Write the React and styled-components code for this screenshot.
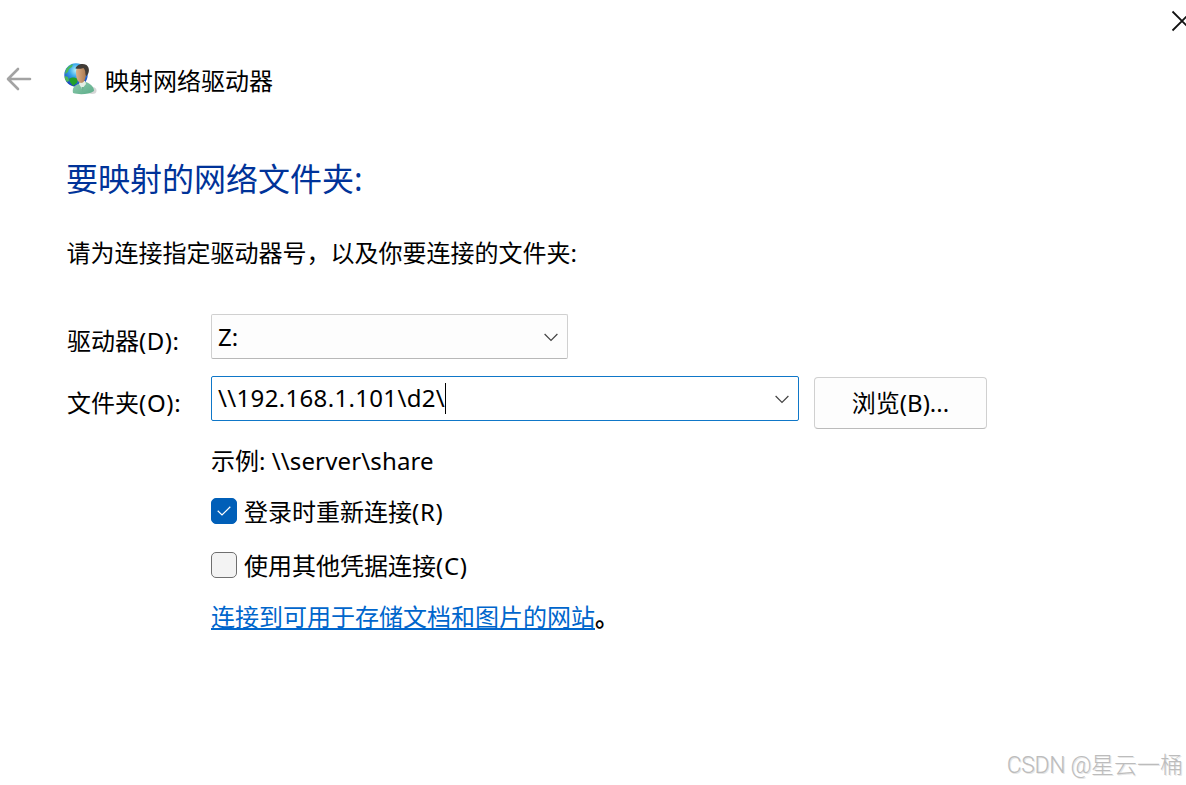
import React from 'react'
import styled, { createGlobalStyle } from 'styled-components'

function App() {
  return (
    <>
      <GlobalStyle />
      <Dialog>
        <TitleBar>
          <CloseButton aria-label='关闭'>
            <svg width='22' height='22' viewBox='0 0 22 22' fill='none' stroke='#111' strokeWidth='1.8'>
              <path d='M1.5 1.5 20.5 20.5M20.5 1.5 1.5 20.5' />
            </svg>
          </CloseButton>
        </TitleBar>
        <Header>
          <BackButton aria-label='返回'>
            <svg width='26' height='24' viewBox='0 0 26 24' fill='none' stroke='#a3a3a3' strokeWidth='2.6' strokeLinecap='round' strokeLinejoin='round'>
              <path d='M12 2 2 12 12 22M2.5 12H24' />
            </svg>
          </BackButton>
          <NetworkUserIcon />
          <Caption>映射网络驱动器</Caption>
        </Header>
        <Content>
          <Heading>要映射的网络文件夹:</Heading>
          <Description>请为连接指定驱动器号，以及你要连接的文件夹:</Description>
          <Field>
            <Label>驱动器<Latin $spacing='.5px'>(D):</Latin></Label>
            <Combo $width={357}>
              <Value>Z:</Value>
              <Chevron />
            </Combo>
          </Field>
          <Field>
            <Label>文件夹<Latin $spacing='.7px'>(O):</Latin></Label>
            <Combo $width={588} $focused>
              <Value $spacing='.33px' $lift='2px'>\\192.168.1.101\d2\</Value>
              <Caret />
              <Chevron />
            </Combo>
            <BrowseButton>浏览(B)...</BrowseButton>
          </Field>
          <Options>
            <Example>示例: <Latin $spacing='.14px'>\\server\share</Latin></Example>
            <CheckRow $height={54}>
              <CheckBox $checked>
                <svg width='14' height='10' viewBox='0 0 14 10' fill='none' stroke='#fff' strokeWidth='1.2'>
                  <path d='M.7 4.8 5 9 13.3.8' />
                </svg>
              </CheckBox>
              <CheckText>登录时重新连接<Latin $spacing='.7px'>(R)</Latin></CheckText>
            </CheckRow>
            <CheckRow $height={49}>
              <CheckBox />
              <CheckText>使用其他凭据连接<Latin $spacing='.7px'>(C)</Latin></CheckText>
            </CheckRow>
            <LinkLine>
              <SiteLink>连接到可用于存储文档和图片的网站</SiteLink>
              <FullStop>。</FullStop>
            </LinkLine>
          </Options>
        </Content>
        <Watermark>CSDN @<WatermarkName>星云一桶</WatermarkName></Watermark>
      </Dialog>
    </>
  )
}

function Chevron() {
  return (
    <svg width='14' height='9' viewBox='0 0 14 9' fill='none' stroke='#444' strokeWidth='1.2'>
      <path d='M.6 1 7 7.5 13.4 1' />
    </svg>
  )
}

function NetworkUserIcon() {
  return (
    <svg width='34' height='34' viewBox='-1 -1 34 34'>
      <defs>
        <radialGradient id='globe' cx='.5' cy='.3' r='.7'>
          <stop offset='0' stopColor='#b5f4fc' />
          <stop offset='.4' stopColor='#35a5ea' />
          <stop offset='1' stopColor='#1638b8' />
        </radialGradient>
        <linearGradient id='face' x1='0' x2='1'>
          <stop offset='0' stopColor='#dcb18a' />
          <stop offset='1' stopColor='#a9764c' />
        </linearGradient>
        <linearGradient id='shirt' x1='0' x2='1' y1='0' y2='1'>
          <stop offset='0' stopColor='#8fcbae' />
          <stop offset='1' stopColor='#5aac88' />
        </linearGradient>
        <clipPath id='globeClip'>
          <circle cx='12' cy='12' r='11.7' />
        </clipPath>
      </defs>
      <ellipse cx='28' cy='27.5' rx='4.5' ry='3.5' fill='#bbb' opacity='.6' />
      <circle cx='12' cy='12' r='11.7' fill='url(#globe)' />
      <g clipPath='url(#globeClip)'>
        <path d='M2 6 5 3 9 1 8 4 5 6 4 9 1 11ZM1 13l3 1 1 4-2 1-3-3Z' fill='#4cb85a' />
        <path d='M5 16c2-2 6-2 9 0l-1 4-4 3-3-4Z' fill='#22a02a' />
      </g>
      <path d='M9 30c-1-5 1-7 5-9l8-2c5 2 8 5 8 9-5 3.5-15 4-21 2Z' fill='url(#shirt)' />
      <path d='m15 21 3 5 4-5-1-3h-5Z' fill='#e3eee3' />
      <path d='m17.5 24 1 5 1.5-5Z' fill='#6fb192' />
      <path d='M12 9c0-4 3-6 7-5 4 0 4 4 3 8-1 5-2 8-5 8-4-1-5-6-5-11Z' fill='url(#face)' />
      <path d='M11.5 5.5c1-4 7-6 11-3.500 3.500 3 3 8 0 11-2-1 0-5-3-8-3 1-6 1-8 .5Z' fill='#413b36' />
    </svg>
  )
}

const GlobalStyle = createGlobalStyle`
  body {
    margin: 0;
    background: #fff;
    color: #000;
    font-family: "Noto Sans", "Noto Sans CJK SC", sans-serif;
    font-size: 24px;
    line-height: 32px;
  }
  button {
    font: inherit;
    color: inherit;
    padding: 0;
  }
  svg {
    display: block;
    flex-shrink: 0;
  }
`

const Dialog = styled.div`
  display: flex;
  flex-direction: column;
  width: 1186px;
  height: 785px;
  overflow: hidden;
  white-space: nowrap;
`

const TitleBar = styled.div`
  display: flex;
  justify-content: flex-end;
  height: 42px;
`

const CloseButton = styled.button`
  display: flex;
  align-items: center;
  width: 15px;
  border: none;
  background: none;
`

const Header = styled.header`
  display: flex;
  align-items: center;
  height: 74px;
  padding-left: 6px;
`

const BackButton = styled.button`
  width: 57px;
  border: none;
  background: none;
`

const Caption = styled.span`
  margin: 3px 0 0 8px;
`

const Content = styled.main`
  padding-left: 66px;
`

const Heading = styled.h1`
  margin: 39px 0 0;
  color: #003399;
  font-size: 32px;
  font-weight: 400;
  line-height: 48px;
`

const Description = styled.p`
  margin: 34px 0 45px;
  padding-left: .5px;
`

const Field = styled.div`
  display: flex;
  height: 62px;
`

const Label = styled.label`
  box-sizing: border-box;
  width: 145px;
  padding: 11px 0 0 1px;
`

const Latin = styled.span`
  letter-spacing: ${(p) => p.$spacing};
`

const Combo = styled.div`
  display: flex;
  box-sizing: border-box;
  align-items: center;
  width: ${(p) => p.$width}px;
  height: 45px;
  padding: 0 9px 0 6px;
  border: 1px solid ${(p) => (p.$focused ? '#0f77c8' : '#d0d0d0')};
  border-bottom-color: ${(p) => (p.$focused ? '#0f77c8' : '#b8b8b8')};
  border-radius: 2px;
  background: ${(p) => (p.$focused ? '#fff' : '#fdfdfd')};

  svg {
    margin: 2px 0 0 auto;
  }
`

const Value = styled.span`
  padding-bottom: ${(p) => p.$lift || 0};
  letter-spacing: ${(p) => p.$spacing || 'normal'};
`

const Caret = styled.i`
  width: 1px;
  height: 31px;
  background: #000;
`

const BrowseButton = styled.button`
  width: 173px;
  height: 52px;
  margin: 1px 0 0 15px;
  border: 1px solid #d0d0d0;
  border-bottom-color: #bbb;
  border-radius: 4px;
  background: #fdfdfd;
`

const Options = styled.div`
  padding: 7px 0 0 145px;
`

const Example = styled.div`
  height: 53px;
`

const CheckRow = styled.label`
  display: flex;
  height: ${(p) => p.$height}px;
`

const CheckBox = styled.span`
  display: flex;
  box-sizing: border-box;
  align-items: center;
  justify-content: center;
  width: 26px;
  height: 26px;
  border: 1.5px solid ${(p) => (p.$checked ? '#005fb8' : '#6f6f6f')};
  border-radius: 5px;
  background: ${(p) => (p.$checked ? '#005fb8' : '#f3f3f3')};
`

const CheckText = styled.span`
  margin: -2px 0 0 7px;
`

const LinkLine = styled.div`
  display: flex;
`

const SiteLink = styled.a`
  color: #0066cc;
  text-decoration: underline;
  text-decoration-thickness: 2px;
  text-underline-offset: 2px;
`

const FullStop = styled.span`
  font-weight: 700;
`

const Watermark = styled.footer`
  margin: auto 3px 3px auto;
  color: #bcbcbc;
  font-family: Roboto, "Noto Sans CJK SC", sans-serif;
  font-size: 23px;
  font-weight: 300;
  letter-spacing: -0.4px;
  text-shadow: 1px 1px 0 #e6e6e6;
`

const WatermarkName = styled.span`
  letter-spacing: 0;
`

export default App
